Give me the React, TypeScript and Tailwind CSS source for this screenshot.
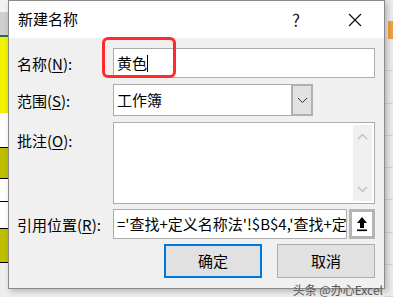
const font = { fontFamily: '"Noto Sans CJK SC", "Noto Sans", sans-serif' };

function Label({ text, hot }: { text: string; hot: string }) {
  return (
    <span className="text-[15px] text-black leading-none whitespace-nowrap">
      {text}(<span className="underline underline-offset-2">{hot}</span>):
    </span>
  );
}

function LeftStrip() {
  return (
    <div className="w-[8px] h-full flex flex-col shrink-0">
      <div className="h-[12px] bg-[#f3f3f3]" />
      <div className="h-[23px] bg-[#cfcfcf]" />
      <div className="h-[2px] bg-[#217346]" />
      <div className="h-[76px] bg-[#f2f200]" />
      <div className="h-[34px] bg-white" />
      <div className="h-[32px] bg-[#bfbf00] border-y border-black" />
      <div className="h-[23px] bg-white border-b border-black" />
      <div className="h-[26px] bg-white" />
      <div className="h-[35px] bg-[#bfbf00] border-y border-black" />
      <div className="flex-1 bg-[#eeeeee]" />
    </div>
  );
}

function RightStrip() {
  return (
    <div className="w-[8px] h-full flex flex-col shrink-0 bg-[#ebebeb]">
      <div className="h-[22px]" />
      <div className="h-[18px] ml-[3px] bg-[#f0a040]" />
      {[0, 1, 2, 3, 4, 5, 6, 7].map((i) => (
        <div key={i} className="h-[33px] border-b border-[#d4d4d4]" />
      ))}
    </div>
  );
}

export default function App() {
  return (
    <div className="w-[393px] h-[297px] flex bg-[#eeeeee] overflow-hidden relative" style={font}>
      <LeftStrip />
      <div className="w-[377px] h-[289px] border border-[#8a8a8a] bg-[#f0f0f0] flex flex-col shrink-0 relative shadow-[2px_2px_6px_rgba(0,0,0,0.25)]">
        {/* title bar */}
        <div className="h-[37px] bg-white flex items-center pl-[9px] pr-[20px]">
          <span className="text-[15px] text-black">新建名称</span>
          <span className="ml-auto text-[17px] text-[#222] mr-[48px]">?</span>
          <svg width="14" height="14" viewBox="0 0 14 14" className="mr-[2px]">
            <path d="M1 1 L13 13 M13 1 L1 13" stroke="#111" strokeWidth="1.2" />
          </svg>
        </div>

        <div className="flex-1 flex flex-col pl-[8px] pr-[9px] pt-[10px]">
          {/* name */}
          <div className="flex items-center h-[30px]">
            <div className="w-[96px]"><Label text="名称" hot="N" /></div>
            <div className="flex-1 h-full bg-white border border-[#acacac] flex items-center pl-[3px]">
              <span className="text-[15px] text-black">黄色</span>
              <span className="w-px h-[17px] bg-black" />
            </div>
          </div>

          {/* scope */}
          <div className="flex items-center h-[32px] mt-[6px]">
            <div className="w-[96px]"><Label text="范围" hot="S" /></div>
            <div className="w-[200px] h-full bg-white border border-[#acacac] flex items-center pl-[3px]">
              <span className="text-[15px] text-black flex-1">工作簿</span>
              <div className="w-[22px] h-[32px] -mr-px bg-[#e1e1e1] border-2 border-[#b0b0b0] flex items-center justify-center">
                <svg width="11" height="7" viewBox="0 0 11 7">
                  <path d="M1 1 L5.5 5.5 L10 1" stroke="#333" strokeWidth="1" fill="none" />
                </svg>
              </div>
            </div>
          </div>

          {/* comment */}
          <div className="flex items-start h-[82px] mt-[6px]">
            <div className="w-[96px] pt-[6px]"><Label text="批注" hot="O" /></div>
            <div className="flex-1 h-full bg-white border border-[#acacac] flex justify-end p-[2px]">
              <div className="w-[19px] h-full bg-[#f0f0f0] flex flex-col items-center justify-between py-[8px]">
                <svg width="11" height="7" viewBox="0 0 11 7">
                  <path d="M1 6 L5.5 1.5 L10 6" stroke="#c2c2c2" strokeWidth="1.5" fill="none" />
                </svg>
                <svg width="11" height="7" viewBox="0 0 11 7">
                  <path d="M1 1 L5.5 5.5 L10 1" stroke="#c2c2c2" strokeWidth="1.5" fill="none" />
                </svg>
              </div>
            </div>
          </div>

          {/* reference */}
          <div className="flex items-center h-[30px] mt-[5px]">
            <div className="w-[96px]"><Label text="引用位置" hot="R" /></div>
            <div className="w-[234px] h-full bg-white border border-[#acacac] flex items-center pl-[3px] overflow-hidden">
              <span className="text-[15px] text-black whitespace-nowrap">='查找+定义名称法'!$B$4,'查找+定义名称法'</span>
            </div>
            <div className="ml-[2px] flex-1 h-full bg-white border-[3px] border-[#b4b4b4] flex items-center justify-center">
              <svg width="12" height="16" viewBox="0 0 12 16">
                <path d="M6 1 L11 7 L8 7 L8 12 L4 12 L4 7 L1 7 Z" fill="#000" />
                <rect x="1" y="13.5" width="10" height="1.6" fill="#000" />
              </svg>
            </div>
          </div>

          {/* buttons */}
          <div className="flex justify-end gap-[15px] mt-[5px]">
            <button className="w-[98px] h-[34px] bg-[#e1e1e1] border-2 border-[#0078d7] text-[15px] text-black">确定</button>
            <button className="w-[98px] h-[34px] bg-[#e1e1e1] border border-[#adadad] text-[15px] text-black">取消</button>
          </div>
        </div>

        {/* highlight around name field */}
        <div className="absolute left-[93px] top-[36px] w-[74px] h-[41px] border-[3px] border-[#ff2a2a] rounded-[6px]" />
      </div>
      <RightStrip />

      <span className="absolute right-[10px] bottom-[1px] text-[12px] text-[#555] leading-none whitespace-nowrap">头条 @办心Excel</span>
    </div>
  );
}
